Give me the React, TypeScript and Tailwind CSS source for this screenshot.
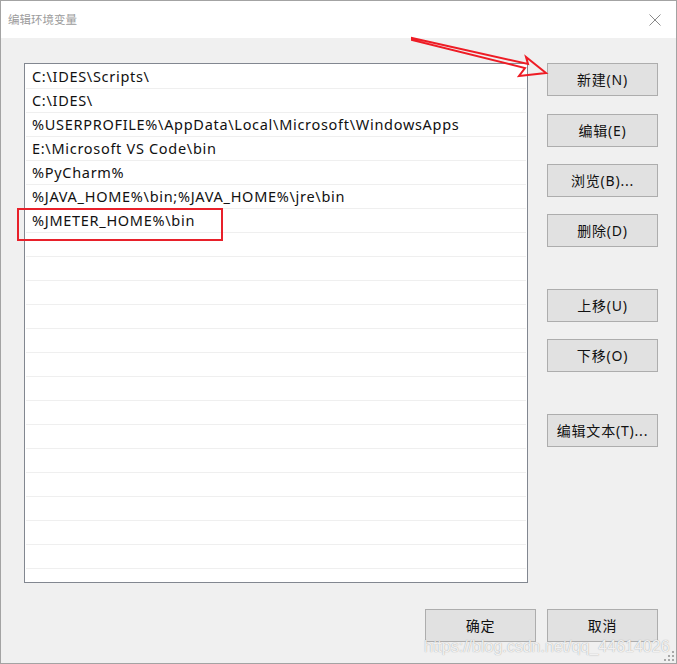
const paths = [
  "C:\\IDES\\Scripts\\",
  "C:\\IDES\\",
  "%USERPROFILE%\\AppData\\Local\\Microsoft\\WindowsApps",
  "E:\\Microsoft VS Code\\bin",
  "%PyCharm%",
  "%JAVA_HOME%\\bin;%JAVA_HOME%\\jre\\bin",
  "%JMETER_HOME%\\bin",
];

const ROWS = 21;

const sideButtons = [
  { label: "新建(N)", gap: "mt-0" },
  { label: "编辑(E)", gap: "mt-[18px]" },
  { label: "浏览(B)...", gap: "mt-[17px]" },
  { label: "删除(D)", gap: "mt-[17px]" },
  { label: "上移(U)", gap: "mt-[42px]" },
  { label: "下移(O)", gap: "mt-[17px]" },
  { label: "编辑文本(T)...", gap: "mt-[42px]" },
];

function WinButton({ label, className = "" }: { label: string; className?: string }) {
  return (
    <button className={`w-[111px] h-[33px] border border-[#adadad] bg-[#e1e1e1] text-[14px] tracking-[0.8px] text-[#111] flex items-center justify-center ${className}`}>
      {label}
    </button>
  );
}

export default function App() {
  return (
    <div
      className="relative w-[677px] h-[664px] border border-[#a3a3a3] bg-[#f0f0f0] flex flex-col overflow-hidden"
      style={{ fontFamily: '"Microsoft YaHei", "Noto Sans", "Noto Sans CJK SC", sans-serif' }}
    >
      {/* Title bar */}
      <div className="h-[37px] bg-white flex items-center justify-between pl-[7px] pr-[15px]">
        <span className="text-[11.5px] text-[#9c9c9c]">编辑环境变量</span>
        <svg width="12" height="12" viewBox="0 0 12 12">
          <path d="M0.5 0.5 L11.5 11.5 M11.5 0.5 L0.5 11.5" stroke="#8a8a8a" strokeWidth="1" fill="none" />
        </svg>
      </div>

      {/* Body */}
      <div className="flex pl-[23px] pt-[25px]">
        {/* Path list */}
        <div className="relative w-[504px] h-[520px] border border-[#828790] bg-white pt-px">
          {Array.from({ length: ROWS }).map((_, i) => (
            <div key={i} className="h-[24px] mx-px border-b border-[#efefef] pl-[6px] flex items-center text-[14.5px] tracking-[0.7px] text-[#111] whitespace-nowrap">
              {paths[i] ?? ""}
            </div>
          ))}
          {/* red annotation box */}
          <div className="absolute left-[-8px] top-[144px] w-[206px] h-[33px] border-2 border-[#e8202a]" />
        </div>

        {/* Side buttons */}
        <div className="flex flex-col ml-[19px]">
          {sideButtons.map((b) => (
            <WinButton key={b.label} label={b.label} className={b.gap} />
          ))}
        </div>
      </div>

      {/* Bottom buttons */}
      <div className="flex justify-end gap-[11px] pr-[18px] mt-[26px]">
        <WinButton label="确定" />
        <WinButton label="取消" />
      </div>

      {/* red arrow annotation */}
      <svg className="absolute left-0 top-0 pointer-events-none" width="677" height="664">
        <path
          d="M411 37 L527 63 L525 56 L545 72 L518 75 L524 67 L411 39 Z"
          stroke="#ee1c25"
          strokeWidth="2"
          strokeLinejoin="miter"
          fill="none"
        />
      </svg>

      {/* watermark */}
      <div
        className="absolute left-[423px] top-[634px] text-[16px] text-white/85 pointer-events-none whitespace-nowrap"
        style={{ fontFamily: '"Liberation Sans", Arial, sans-serif', textShadow: "0 0 1px #8f8f8f" }}
      >
        https://blog.csdn.net/qq_44614026
      </div>

      {/* resize grip */}
      <svg className="absolute right-[2px] bottom-[2px]" width="10" height="10" viewBox="0 0 10 10">
        <rect x="8" y="0" width="2" height="2" fill="#a8a8a8" />
        <rect x="4" y="4" width="2" height="2" fill="#a8a8a8" />
        <rect x="8" y="4" width="2" height="2" fill="#a8a8a8" />
        <rect x="0" y="8" width="2" height="2" fill="#a8a8a8" />
        <rect x="4" y="8" width="2" height="2" fill="#a8a8a8" />
        <rect x="8" y="8" width="2" height="2" fill="#a8a8a8" />
      </svg>
    </div>
  );
}
